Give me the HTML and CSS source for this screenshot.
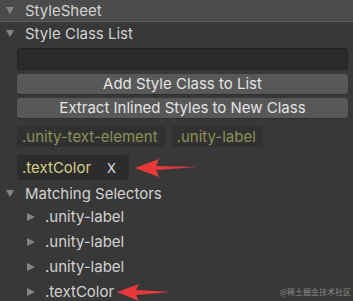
FILE: index.html
```html
<!DOCTYPE html>
<html lang="en">
<head>
    <meta charset="UTF-8">
    <title>StyleSheet</title>
    <link rel="stylesheet" href="styles.css">
</head>
<body>
    <div class="panel">
        <div class="header">
            <span class="tri down"></span>
            <span>StyleSheet</span>
        </div>
        <div class="foldout">
            <span class="tri down"></span>
            <span>Style Class List</span>
        </div>
        <div class="content">
            <div class="field"></div>
            <div class="btn">Add Style Class to List</div>
            <div class="btn">Extract Inlined Styles to New Class</div>
            <div class="tags">
                <span class="tag">.unity-text-element</span>
                <span class="tag">.unity-label</span>
            </div>
            <div class="tags">
                <span class="tag own">.textColor<span class="close">X</span></span>
            </div>
        </div>
        <div class="foldout matching">
            <span class="tri down"></span>
            <span>Matching Selectors</span>
        </div>
        <ul class="selectors">
            <li><span class="tri right"></span>.unity-label</li>
            <li><span class="tri right"></span>.unity-label</li>
            <li><span class="tri right"></span>.unity-label</li>
            <li><span class="tri right"></span>.textColor</li>
        </ul>

        <svg class="arrow a1" width="62" height="22" viewBox="0 0 62 22">
            <polygon points="0,11 24,2 21,9 62,10 21,13 24,20" fill="#e8393a"/>
        </svg>
        <svg class="arrow a2" width="54" height="20" viewBox="0 0 54 20">
            <polygon points="0,10 22,2 19,8 54,10 19,13 22,19" fill="#e8393a"/>
        </svg>
        <div class="mark">@稀土掘金技术社区</div>
    </div>
</body>
</html>
```

FILE: styles.css
```css
body,ul,li{
    margin: 0;
    padding: 0;
    list-style: none;
}
body{
    background: #383838;
    font-family: Inter, "Noto Sans", sans-serif;
    font-size: 15px;
    color: #d2d2d2;
}
.panel{
    width: 353px;
    height: 301px;
    position: relative;
    overflow: hidden;
    background: #383838;
}
.header{
    height: 21px;
    background: #4b4b4b;
    border-bottom: 1px solid #5c5c5c;
    display: flex;
    align-items: center;
}
.foldout{
    height: 22px;
    display: flex;
    align-items: center;
}
.tri{
    width: 0;
    height: 0;
    display: inline-block;
}
.tri.down{
    border-left: 4.5px solid transparent;
    border-right: 4.5px solid transparent;
    border-top: 7px solid #858585;
    margin: 0 11px 0 6px;
}
.tri.right{
    border-top: 4.5px solid transparent;
    border-bottom: 4.5px solid transparent;
    border-left: 8px solid #858585;
    margin: 0 10px 0 27px;
}
.content{
    padding: 4px 5px 0 17px;
    display: flex;
    flex-direction: column;
    gap: 4px;
}
.field{
    height: 20px;
    background: #2a2a2a;
    border: 1px solid #222;
    border-radius: 3px;
}
.btn{
    height: 20px;
    line-height: 20px;
    background: #585858;
    border-radius: 3px;
    box-shadow: 0 1px 0 #2e2e2e;
    text-align: center;
    color: #e4e4e4;
}
.tags{
    display: flex;
    gap: 7px;
    margin-top: 4px;
}
.tag{
    height: 21px;
    line-height: 21px;
    padding: 0 7px 0 5px;
    background: #313131;
    border-radius: 3px;
    color: #8e9058;
}
.tag.own{
    height: 25px;
    line-height: 25px;
    color: #d3d185;
    background: #2c2c2c;
    padding-right: 13px;
}
.close{
    color: #e6e6e6;
    font-size: 13px;
    margin-left: 16px;
}
.matching{
    margin-top: 2px;
}
.selectors li{
    height: 25px;
    display: flex;
    align-items: center;
}
.arrow{
    position: absolute;
}
.a1{
    left: 135px;
    top: 157px;
}
.a2{
    left: 117px;
    top: 282px;
}
.mark{
    position: absolute;
    right: 2px;
    bottom: 4px;
    font-family: "Noto Sans CJK SC", sans-serif;
    font-size: 8px;
    color: #8a8a8a;
}
```
